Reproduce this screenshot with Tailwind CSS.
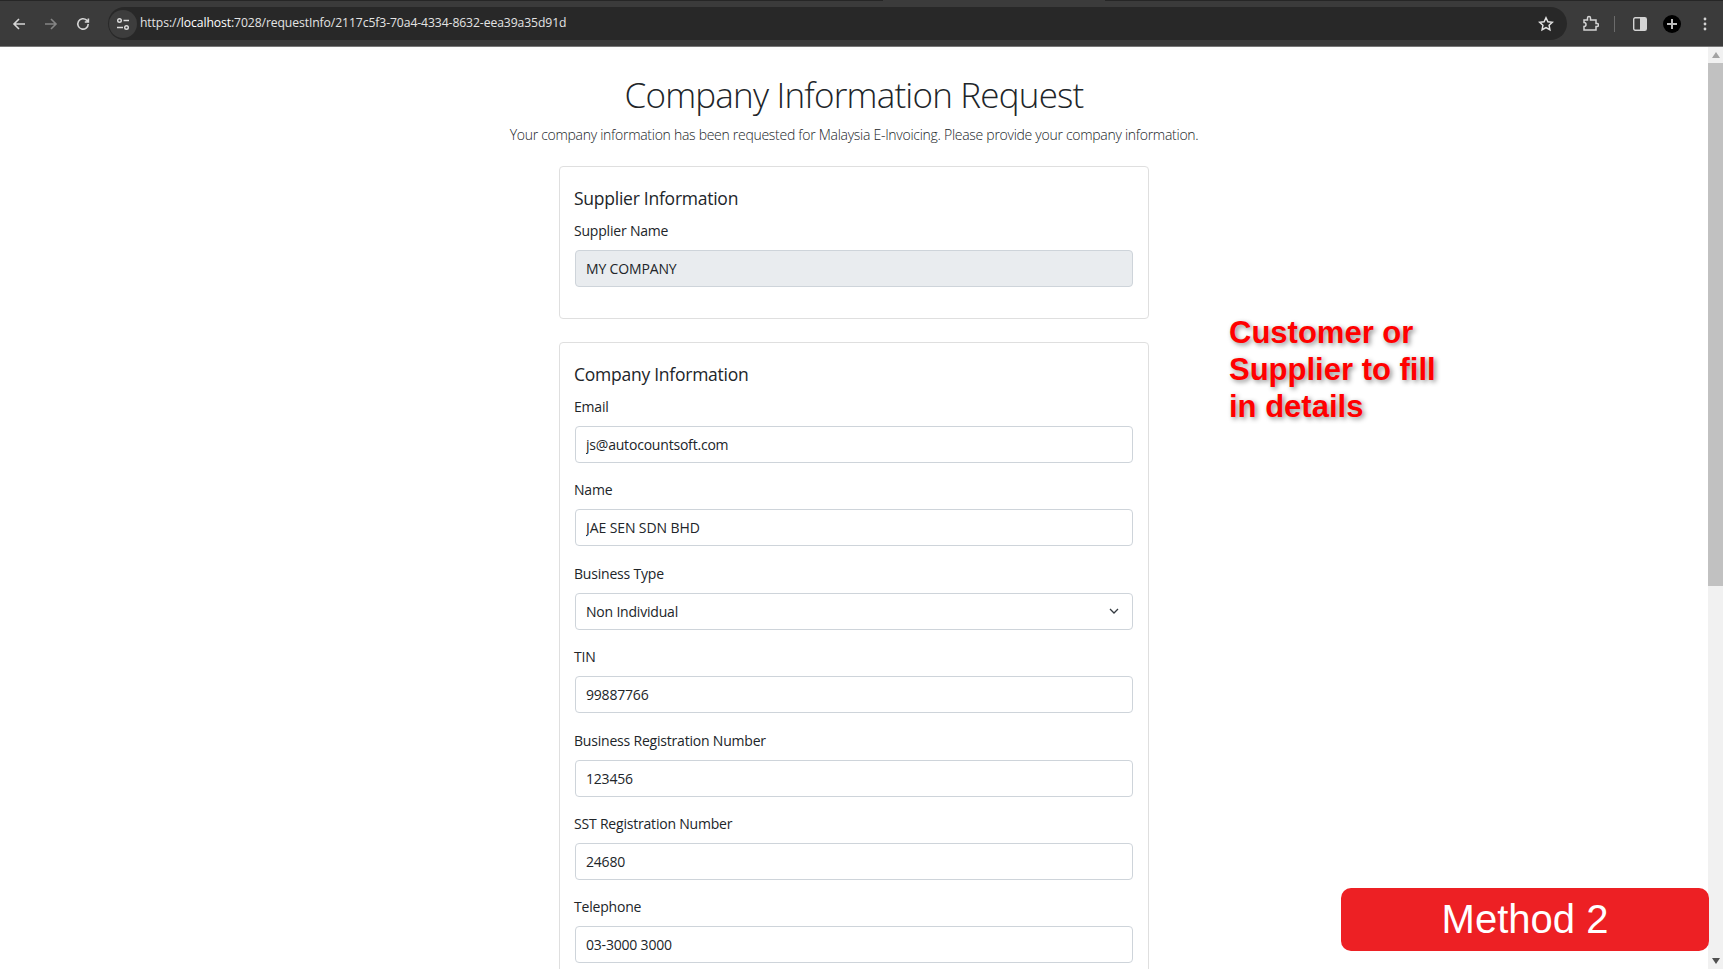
<!DOCTYPE html>
<html lang="en">
  <head>
    <meta charset="UTF-8" />
    <meta name="viewport" content="width=device-width, initial-scale=1.0" />
    <script src="https://cdn.jsdelivr.net/npm/@tailwindcss/browser@4"></script>
    <title>Company Information Request</title>
  </head>

  <body class="h-[969px] overflow-hidden bg-white font-['Open_Sans',sans-serif] text-[#212529]">
    <!-- browser toolbar -->
    <div class="h-[47px] bg-[#3b3b3b] border-b border-b-[#777]">
      <div class="flex h-[1px] justify-between">
        <div class="w-[883px] bg-[#262626]"></div>
        <div class="w-[618px] bg-[#262626]"></div>
      </div>
      <div class="flex h-[45px] items-center">
        <div class="flex w-[108px] items-center gap-[16px] pl-[11px]">
          <svg class="h-[16px] w-[16px]" viewBox="0 0 16 16" fill="none" stroke="#d6d6d6" stroke-width="1.6"><path d="M14 8H3M8 3 3 8l5 5" /></svg>
          <svg class="h-[16px] w-[16px]" viewBox="0 0 16 16" fill="none" stroke="#858585" stroke-width="1.6"><path d="M2 8h11M8 3l5 5-5 5" /></svg>
          <svg class="h-[16px] w-[16px]" viewBox="0 0 16 16" fill="none" stroke="#d6d6d6" stroke-width="1.6"><path d="M13.2 8A5.2 5.2 0 1 1 11.6 4.2L13.4 6M13.4 2.4V6H9.8" /></svg>
        </div>
        <div class="flex h-[33px] w-[1459px] items-center rounded-full bg-[#282828]">
          <div class="ml-[1px] flex h-[28px] w-[28px] items-center justify-center rounded-full bg-[#3d3d3d]">
            <svg class="h-[14px] w-[14px]" viewBox="0 0 14 14" fill="none" stroke="#dcdcdc" stroke-width="1.4"><circle cx="3.5" cy="3.5" r="1.8" /><path d="M7.5 3.5H13M1 10.5h6" /><circle cx="10.5" cy="10.5" r="1.8" /></svg>
          </div>
          <span class="ml-[3px] text-[12.2px] tracking-[-0.1px] text-[#e3e3e3]">https://<span class="text-white">localhost</span>:7028/requestInfo/2117c5f3-70a4-4334-8632-eea39a35d91d</span>
          <svg class="ml-auto mr-[13px] h-[16px] w-[16px]" viewBox="0 0 16 16" fill="none" stroke="#e3e3e3" stroke-width="1.5"><path d="M8 1.8l1.9 4 4.4.5-3.2 3 .8 4.4L8 11.5l-3.9 2.2.8-4.4-3.2-3 4.4-.5z" /></svg>
        </div>
        <div class="flex flex-1 items-center pl-[15px]">
          <svg class="h-[17px] w-[17px]" viewBox="0 0 17 17" fill="none" stroke="#d4d4d4" stroke-width="1.5"><path d="M2 5h3.5V3a1.5 1.5 0 0 1 3 0v2H14v3.5h1a1.5 1.5 0 0 1 0 3h-1V15H2v-3.5a2 2 0 0 0 0-4z" /></svg>
          <div class="ml-[15px] h-[16px] w-px bg-[#6b6b6b]"></div>
          <svg class="ml-[18px] h-[14px] w-[14px]" viewBox="0 0 14 14"><rect x="0.7" y="0.7" width="12.6" height="12.6" rx="1.5" fill="none" stroke="#d4d4d4" stroke-width="1.4" /><rect x="7" y="1" width="6" height="12" fill="#d4d4d4" /></svg>
          <div class="ml-[16px] flex h-[18px] w-[18px] items-center justify-center rounded-full bg-black">
            <svg class="h-[10px] w-[10px]" viewBox="0 0 10 10" fill="#bdbdbd"><path d="M4 0h2v4h4v2H6v4H4V6H0V4h4z" /></svg>
          </div>
          <svg class="ml-[22px] h-[14px] w-[4px]" viewBox="0 0 4 14" fill="#d4d4d4"><circle cx="2" cy="2" r="1.4" /><circle cx="2" cy="7" r="1.4" /><circle cx="2" cy="12" r="1.4" /></svg>
        </div>
      </div>
    </div>

    <div class="relative flex h-[922px]">
      <!-- page -->
      <main class="flex-1 overflow-hidden">
        <div class="flex flex-col items-center">
          <h1 class="mt-[24px] text-center text-[35px] leading-[48px] font-light tracking-[-0.8px] text-[#212529]">Company Information Request</h1>
          <p class="mt-[3px] pt-[1px] text-center text-[14px] leading-[24px] font-light tracking-[-0.28px]">Your company information has been requested for Malaysia E-Invoicing. Please provide your company information.</p>

          <section class="mt-[19px] h-[153px] w-[590px] rounded-[4px] border border-[#dfdfdf] pl-[14px] pr-[15px] pt-[17px]">
            <h2 class="text-[17.5px] leading-[28px] tracking-[-0.25px]">Supplier Information</h2>
            <label class="mt-[8px] block text-[14px] leading-[22px] tracking-[-0.2px]">Supplier Name</label>
            <input class="mt-[8px] ml-[1px] h-[37px] w-[558px] rounded-[4px] border border-[#ced4da] bg-[#e9ecef] px-[10px] text-[14px] tracking-[-0.15px]" value="MY COMPANY" disabled />
          </section>

          <section class="mt-[23px] w-[590px] rounded-[4px] border border-[#dfdfdf] pl-[14px] pr-[15px] pb-[40px] pt-[17px]">
            <h2 class="text-[17.5px] leading-[28px] tracking-[-0.25px]">Company Information</h2>
            <div class="mt-[8px] flex flex-col gap-[16.4px]">
              <div>
                <label class="block text-[14px] leading-[22px] tracking-[-0.2px]">Email</label>
                <input class="mt-[8px] ml-[1px] h-[37px] w-[558px] rounded-[4px] border border-[#ced4da] px-[10px] text-[14px] tracking-[-0.2px]" value="js@autocountsoft.com" />
              </div>
              <div>
                <label class="block text-[14px] leading-[22px] tracking-[-0.2px]">Name</label>
                <input class="mt-[8px] ml-[1px] h-[37px] w-[558px] rounded-[4px] border border-[#ced4da] px-[10px] text-[14px] tracking-[-0.1px]" value="JAE SEN SDN BHD" />
              </div>
              <div>
                <label class="block text-[14px] leading-[22px] tracking-[-0.2px]">Business Type</label>
                <div class="mt-[8px] ml-[1px] flex h-[37px] w-[558px] items-center justify-between rounded-[4px] border border-[#ced4da] pl-[10px] pr-[12px] text-[14px] tracking-[-0.2px]">
                  <span>Non Individual</span>
                  <svg class="h-[12px] w-[12px]" viewBox="0 0 12 12" fill="none" stroke="#343a40" stroke-width="1.3"><path d="M2 4l4 4 4-4" /></svg>
                </div>
              </div>
              <div>
                <label class="block text-[14px] leading-[22px] tracking-[-0.2px]">TIN</label>
                <input class="mt-[8px] ml-[1px] h-[37px] w-[558px] rounded-[4px] border border-[#ced4da] px-[10px] text-[14px] tracking-[-0.2px]" value="99887766" />
              </div>
              <div>
                <label class="block text-[14px] leading-[22px] tracking-[-0.2px]">Business Registration Number</label>
                <input class="mt-[8px] ml-[1px] h-[37px] w-[558px] rounded-[4px] border border-[#ced4da] px-[10px] text-[14px] tracking-[-0.2px]" value="123456" />
              </div>
              <div>
                <label class="block text-[14px] leading-[22px] tracking-[-0.2px]">SST Registration Number</label>
                <input class="mt-[8px] ml-[1px] h-[37px] w-[558px] rounded-[4px] border border-[#ced4da] px-[10px] text-[14px] tracking-[-0.2px]" value="24680" />
              </div>
              <div>
                <label class="block text-[14px] leading-[22px] tracking-[-0.2px]">Telephone</label>
                <input class="mt-[8px] ml-[1px] h-[37px] w-[558px] rounded-[4px] border border-[#ced4da] px-[10px] text-[14px] tracking-[-0.2px]" value="03-3000 3000" />
              </div>
            </div>
          </section>
        </div>
      </main>

      <!-- scrollbar -->
      <div class="flex w-[15px] flex-col items-center bg-[#f1f1f1]">
        <svg class="mt-[5px] h-[6px] w-[8px]" viewBox="0 0 8 6" fill="#a3a3a3"><path d="M4 0l4 6H0z" /></svg>
        <div class="mt-[5px] h-[523px] w-full bg-[#c1c1c1]"></div>
        <svg class="mt-auto mb-[5px] h-[6px] w-[8px]" viewBox="0 0 8 6" fill="#505050"><path d="M0 0h8L4 6z" /></svg>
      </div>

      <!-- annotations over the page -->
      <div class="absolute left-[1229px] top-[267px] text-[31px] leading-[37px] font-bold text-[#f00] font-['Liberation_Sans',sans-serif] [text-shadow:2px_2px_5px_rgba(0,0,0,0.45)]">
        Customer or<br />Supplier to fill<br />in details
      </div>
      <div class="absolute left-[1341px] top-[841px] flex h-[63px] w-[368px] items-center justify-center rounded-[10px] bg-[#ed2024] pb-[2px] font-['Liberation_Sans',sans-serif] text-[40px] text-white">Method 2</div>
    </div>
  </body>
</html>
